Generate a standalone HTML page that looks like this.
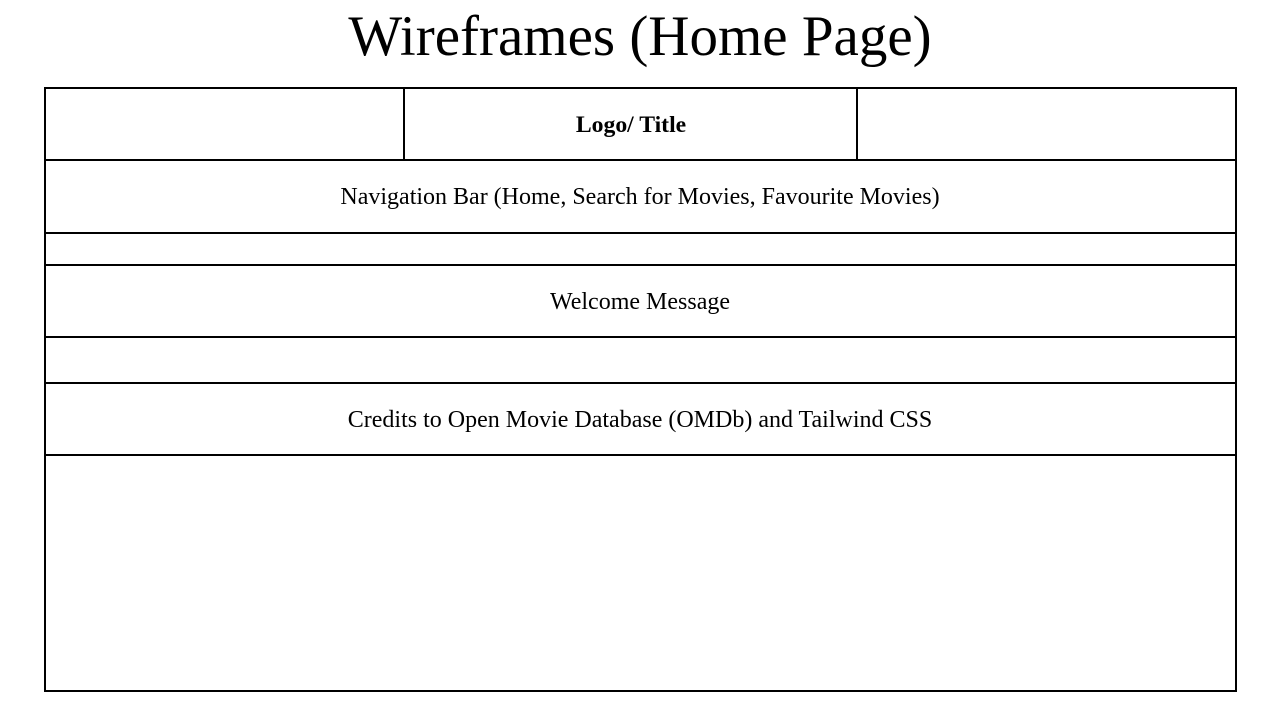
<!DOCTYPE html>
<html><head><style>
body{margin:0;width:1280px;height:720px;background:#fff;position:relative;overflow:hidden;font-family:"Liberation Serif",serif;color:#000}
.t{position:absolute;left:0;width:1280px;text-align:center;white-space:nowrap}
.h{position:absolute;left:45px;width:1191px;height:2px;background:#000}
.v{position:absolute;top:88px;width:2px;height:72px;background:#000}
</style></head><body>
<div class="t" style="top:4px;font-size:57px;line-height:66px">Wireframes (Home Page)</div>
<div style="position:absolute;left:44px;top:87px;width:1189px;height:601px;border:2px solid #000"></div>
<div class="v" style="left:403px"></div>
<div class="v" style="left:856px"></div>
<div class="h" style="top:159px"></div>
<div class="h" style="top:232px"></div>
<div class="h" style="top:264px"></div>
<div class="h" style="top:336px"></div>
<div class="h" style="top:382px"></div>
<div class="h" style="top:454px"></div>
<div class="t" style="left:405px;width:452px;top:111px;font-size:23.7px;font-weight:bold;line-height:28px">Logo/ Title</div>
<div class="t" style="top:183px;font-size:24px;line-height:28px">Navigation Bar (Home, Search for Movies, Favourite Movies)</div>
<div class="t" style="top:288px;font-size:24px;line-height:28px">Welcome Message</div>
<div class="t" style="top:406px;font-size:24px;line-height:28px">Credits to Open Movie Database (OMDb) and Tailwind CSS</div>
</body></html>
